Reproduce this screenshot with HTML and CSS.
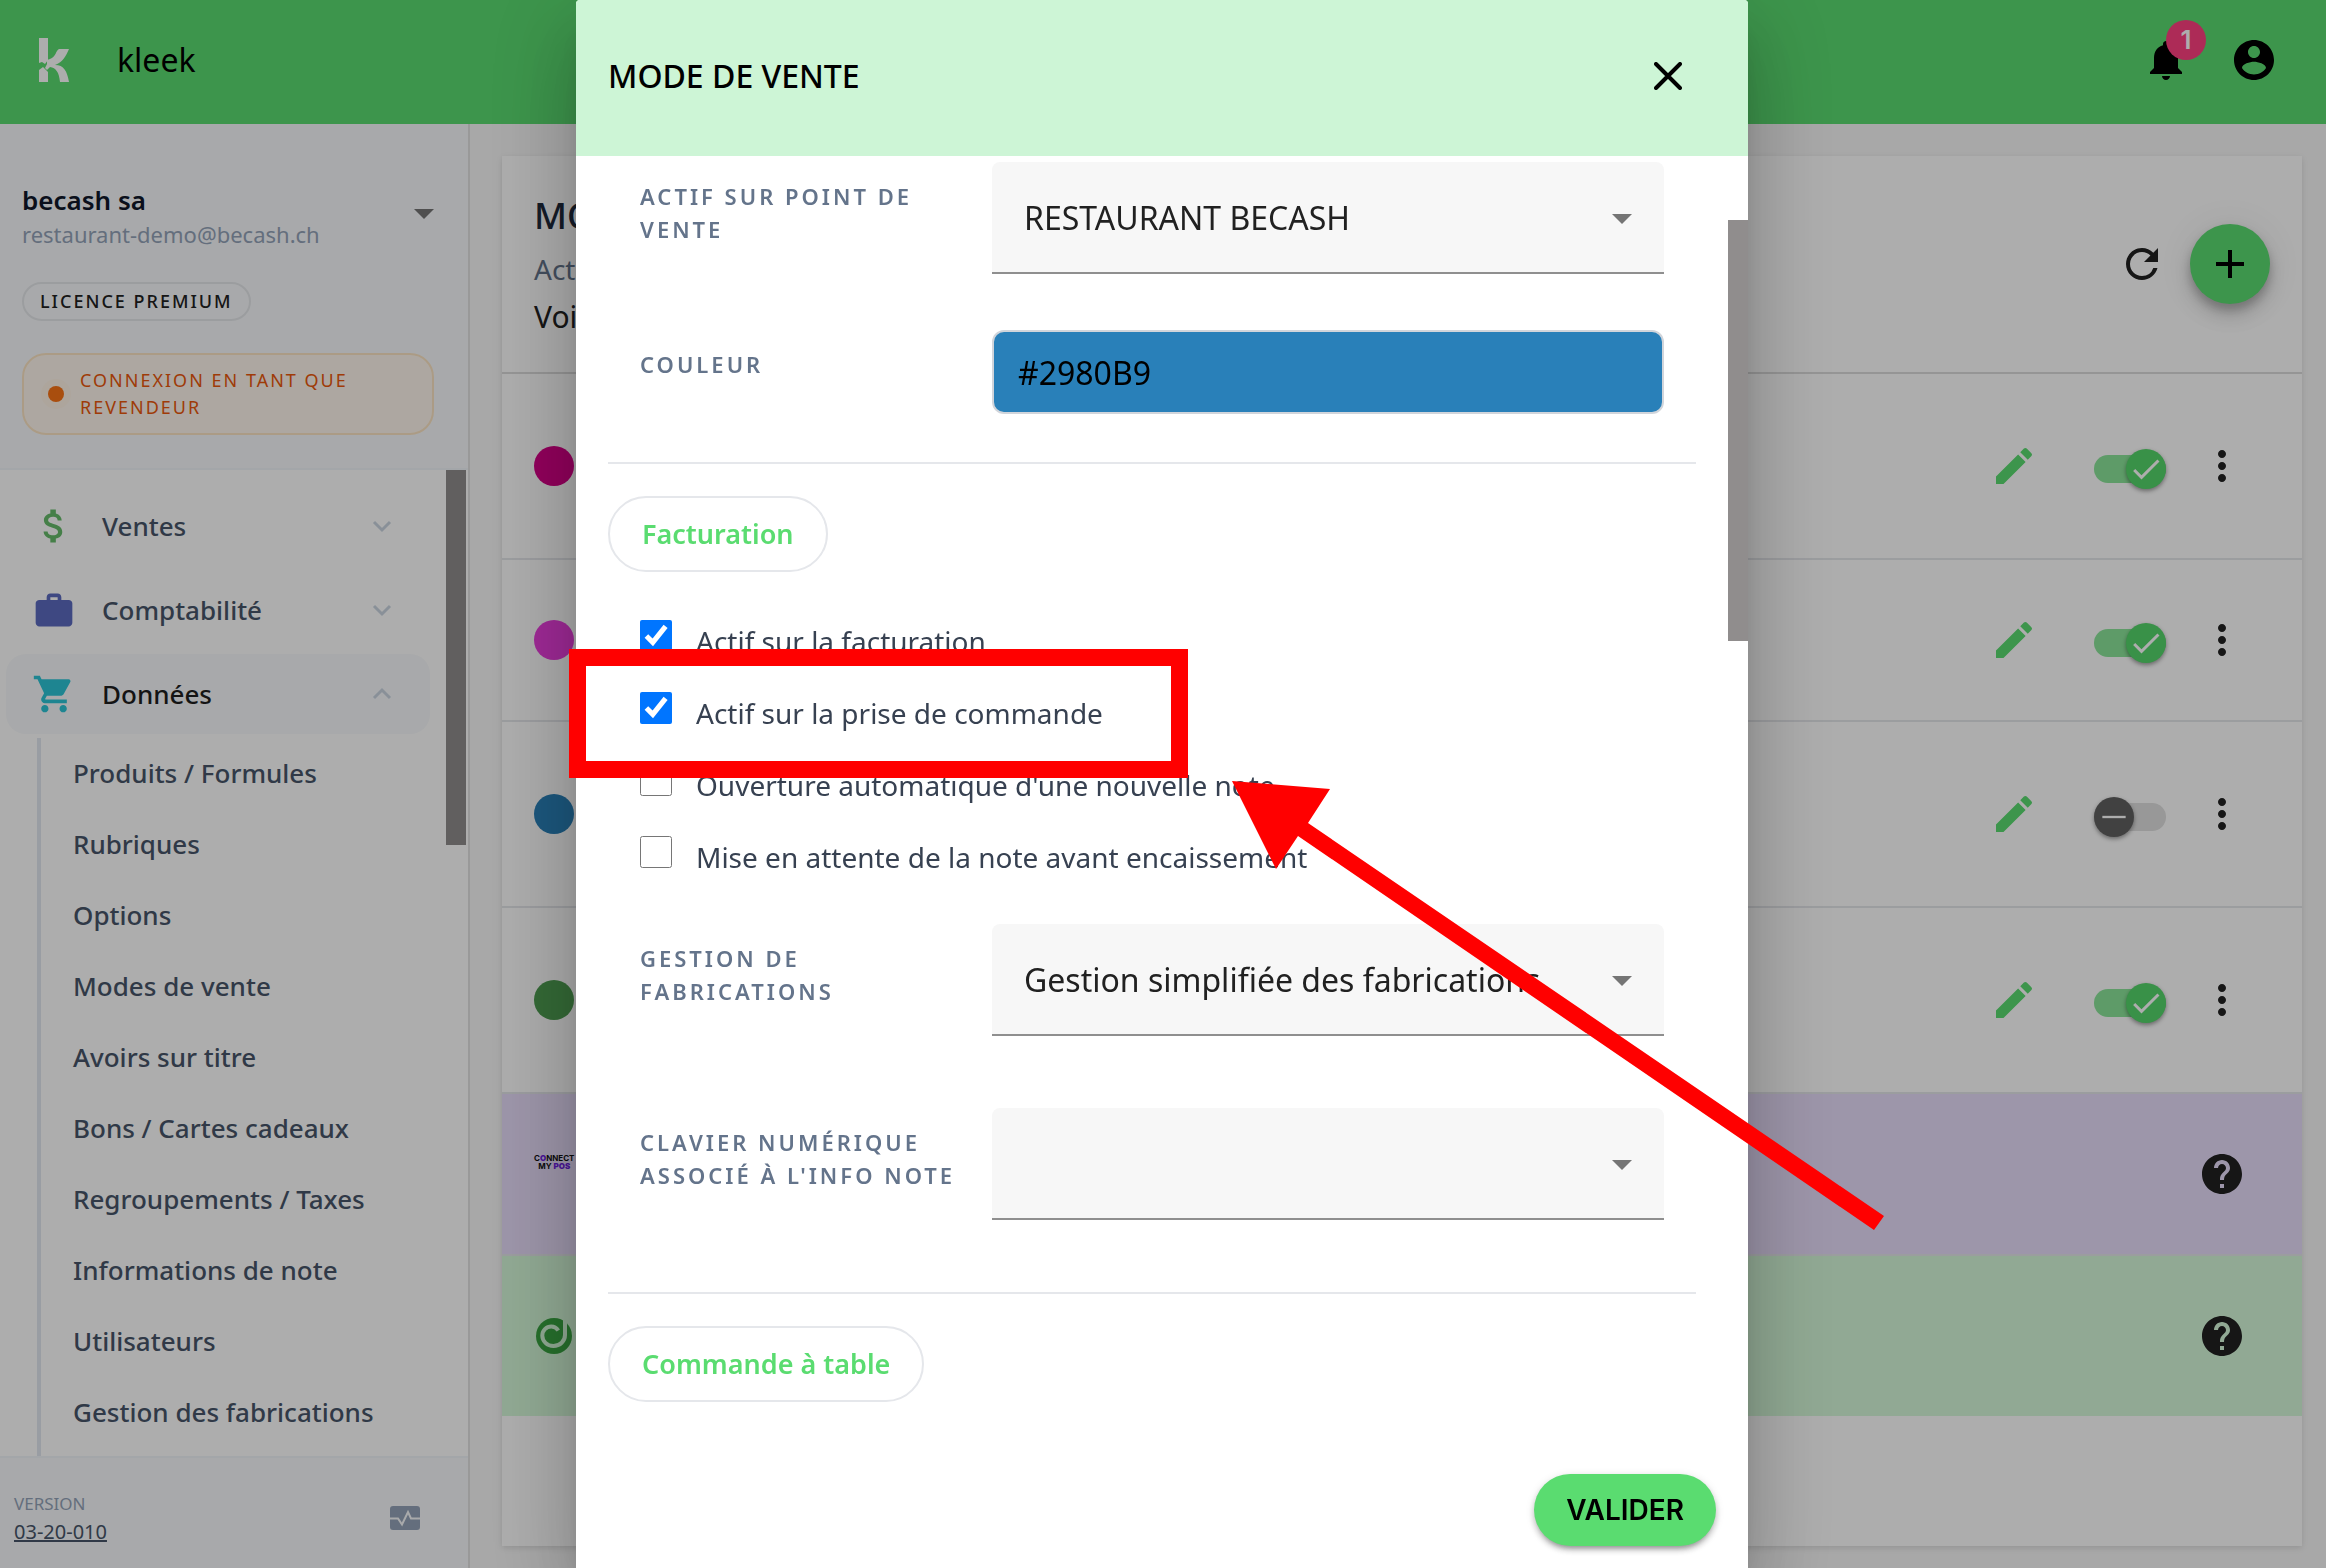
FILE: index.html
```html
<!DOCTYPE html>
<html lang="fr">
<head>
    <meta charset="utf-8">
    <meta name="viewport" content="width=device-width, initial-scale=1">
    <link rel="stylesheet" href="styles.css">
    <title>kleek</title>
</head>
<body>
<svg class="sprite" aria-hidden="true">
    <symbol id="i-pencil" viewBox="0 0 24 24"><path d="M3 17.25V21h3.75L17.81 9.94l-3.75-3.75L3 17.25zM20.71 7.04a1 1 0 0 0 0-1.41l-2.34-2.34a1 1 0 0 0-1.41 0l-1.83 1.83 3.75 3.75 1.83-1.83z"/></symbol>
    <symbol id="i-more" viewBox="0 0 24 24"><path d="M12 8c1.1 0 2-.9 2-2s-.9-2-2-2-2 .9-2 2 .9 2 2 2zm0 2c-1.1 0-2 .9-2 2s.9 2 2 2 2-.9 2-2-.9-2-2-2zm0 6c-1.1 0-2 .9-2 2s.9 2 2 2 2-.9 2-2-.9-2-2-2z"/></symbol>
    <symbol id="i-help" viewBox="0 0 24 24"><path d="M12 2C6.48 2 2 6.48 2 12s4.480 10 10 10 10-4.480 10-10S17.520 2 12 2zm1 17h-2v-2h2v2zm2.070-7.750-.9.920C13.450 12.900 13 13.500 13 15h-2v-.5c0-1.100.45-2.100 1.170-2.830l1.240-1.260c.37-.36.59-.86.59-1.410 0-1.100-.9-2-2-2s-2 .9-2 2H8c0-2.210 1.790-4 4-4s4 1.790 4 4c0 .88-.36 1.680-.93 2.250z"/></symbol>
    <symbol id="i-chevron" viewBox="0 0 24 24"><path d="M4 8l8 8 8-8" fill="none" stroke="currentColor" stroke-width="3"/></symbol>
    <symbol id="i-arrow" viewBox="0 0 20 10"><path d="M0 0h20L10 10z"/></symbol>
    <symbol id="i-check" viewBox="0 0 24 24"><path d="M9 16.170 4.830 12l-1.420 1.410L9 19 21 7l-1.410-1.410z"/></symbol>
</svg>

<div class="app">
    <header class="topbar">
        <svg class="logo" viewBox="0 0 30 44" aria-hidden="true">
            <path d="M0 0h9v22L6 26 3 24 0 25z"/>
            <path d="M0 32l4-3 3 3 2 2v10H0z"/>
            <path d="M8 22l3-1C17 19 17 12 20 11h10C27 18 24 24 16 27c9 0 12 6 14 17H21C20 34 17 30 11 29l-3 3-2-2 2-4z"/>
        </svg>
        <span class="brand">kleek</span>
        <button class="bell" aria-label="Notifications">
            <svg viewBox="0 0 24 24"><path d="M12 22c1.100 0 2-.9 2-2h-4c0 1.100.9 2 2 2zm6-6v-5c0-3.070-1.630-5.640-4.500-6.320V4c0-.83-.67-1.500-1.500-1.500s-1.500.67-1.500 1.500v.68C7.640 5.360 6 7.920 6 11v5l-2 2v1h16v-1l-2-2z"/></svg>
            <span class="badge">1</span>
        </button>
        <button class="account" aria-label="Compte">
            <svg viewBox="0 0 24 24"><path d="M12 2C6.480 2 2 6.480 2 12s4.480 10 10 10 10-4.480 10-10S17.520 2 12 2zm0 3c1.660 0 3 1.340 3 3s-1.340 3-3 3-3-1.340-3-3 1.340-3 3-3zm0 14.200c-2.500 0-4.710-1.280-6-3.220.03-1.990 4-3.080 6-3.080 1.990 0 5.970 1.090 6 3.080-1.290 1.940-3.500 3.220-6 3.220z"/></svg>
        </button>
    </header>

    <aside class="sidebar">
        <div class="profile">
            <button class="company">
                <span class="company-text">
                    <span class="company-name">becash sa</span>
                    <span class="company-mail">restaurant-demo@becash.ch</span>
                </span>
                <svg class="caret"><use href="#i-arrow"/></svg>
            </button>
            <span class="licence">LICENCE PREMIUM</span>
            <div class="reseller"><span class="dot"></span><span>CONNEXION EN TANT QUE REVENDEUR</span></div>
        </div>

        <nav class="menu">
            <div class="menu-scroll">
                <a class="menu-item" href="#">
                    <svg class="menu-icon sales" viewBox="0 0 24 24"><path d="M11.800 10.900c-2.270-.59-3-1.200-3-2.150 0-1.090 1.010-1.850 2.700-1.850 1.780 0 2.440.85 2.500 2.100h2.210c-.07-1.720-1.120-3.300-3.210-3.810V3h-3v2.160c-1.940.42-3.500 1.680-3.500 3.610 0 2.310 1.910 3.460 4.700 4.130 2.500.6 3 1.480 3 2.410 0 .69-.49 1.790-2.700 1.790-2.060 0-2.870-.92-2.980-2.100h-2.200c.12 2.190 1.760 3.420 3.680 3.830V21h3v-2.150c1.950-.37 3.500-1.500 3.500-3.550 0-2.840-2.430-3.810-4.700-4.400z"/></svg>
                    <span>Ventes</span>
                    <svg class="chevron"><use href="#i-chevron"/></svg>
                </a>
                <a class="menu-item" href="#">
                    <svg class="menu-icon accounting" viewBox="0 0 24 24"><path d="M20 6.500h-4V5c0-1.110-.89-2-2-2h-4c-1.110 0-2 .89-2 2v1.500H4c-1.110 0-2 .7-2 1.800V19c0 1.110.89 2 2 2h16c1.110 0 2-.89 2-2V8.300c0-1.100-.89-1.800-2-1.800zm-6 0h-4V5h4v1.500z"/></svg>
                    <span>Comptabilité</span>
                    <svg class="chevron"><use href="#i-chevron"/></svg>
                </a>
                <a class="menu-item active" href="#">
                    <svg class="menu-icon data" viewBox="0 0 24 24"><path d="M7 18c-1.100 0-1.990.9-1.990 2S5.900 22 7 22s2-.9 2-2-.9-2-2-2zM1 2v2h2l3.600 7.590-1.350 2.450c-.16.28-.25.61-.25.96 0 1.100.9 2 2 2h12v-2H7.420c-.14 0-.25-.11-.25-.25l.03-.12.9-1.630h7.450c.75 0 1.410-.41 1.750-1.030l3.580-6.490A1 1 0 0 0 20 4H5.210l-.94-2H1zm16 16c-1.100 0-1.990.9-1.990 2s.89 2 1.990 2 2-.9 2-2-.9-2-2-2z"/></svg>
                    <span>Données</span>
                    <svg class="chevron up"><use href="#i-chevron"/></svg>
                </a>
                <ul class="submenu">
                    <li><a href="#">Produits / Formules</a></li>
                    <li><a href="#">Rubriques</a></li>
                    <li><a href="#">Options</a></li>
                    <li><a href="#">Modes de vente</a></li>
                    <li><a href="#">Avoirs sur titre</a></li>
                    <li><a href="#">Bons / Cartes cadeaux</a></li>
                    <li><a href="#">Regroupements / Taxes</a></li>
                    <li><a href="#">Informations de note</a></li>
                    <li><a href="#">Utilisateurs</a></li>
                    <li><a href="#">Gestion des fabrications</a></li>
                </ul>
            </div>
            <div class="menu-thumb"></div>
        </nav>

        <footer class="version">
            <div>
                <div class="version-label">VERSION</div>
                <a href="#">03-20-010</a>
            </div>
            <svg class="pulse" viewBox="0 0 30 24"><path d="M3 0h24a3 3 0 0 1 3 3v18a3 3 0 0 1-3 3H3a3 3 0 0 1-3-3V3a3 3 0 0 1 3-3z"/><path d="M0 12.500h8l4 6L18 6l3 6.500h9" fill="none" stroke="#f8fafc" stroke-width="2"/></svg>
        </footer>
    </aside>

    <main class="content">
        <section class="card">
            <div class="card-head">
                <div class="card-titles">
                    <h1>MO</h1>
                    <p class="card-sub">Act</p>
                    <p class="card-link">Voi</p>
                </div>
                <button class="icon-btn" aria-label="Actualiser"><svg viewBox="0 0 24 24"><path d="M17.650 6.350A7.958 7.958 0 0 0 12 4c-4.420 0-7.990 3.580-7.990 8s3.570 8 7.990 8c3.730 0 6.840-2.550 7.730-6h-2.080A5.990 5.990 0 0 1 12 18c-3.310 0-6-2.690-6-6s2.690-6 6-6c1.660 0 3.140.69 4.220 1.780L13 11h7V4l-2.350 2.350z"/></svg></button>
                <button class="fab" aria-label="Ajouter"><svg viewBox="0 0 24 24"><path d="M19 13h-6v6h-2v-6H5v-2h6V5h2v6h6v2z"/></svg></button>
            </div>
            <ul class="modes">
                <li class="mode tall">
                    <span class="swatch pink"></span>
                    <button class="icon-btn edit" aria-label="Modifier"><svg><use href="#i-pencil"/></svg></button>
                    <label class="switch"><input type="checkbox" aria-label="Actif" checked><span class="knob"><svg><use href="#i-check"/></svg></span></label>
                    <button class="icon-btn" aria-label="Plus"><svg><use href="#i-more"/></svg></button>
                </li>
                <li class="mode">
                    <span class="swatch magenta"></span>
                    <button class="icon-btn edit" aria-label="Modifier"><svg><use href="#i-pencil"/></svg></button>
                    <label class="switch"><input type="checkbox" aria-label="Actif" checked><span class="knob"><svg><use href="#i-check"/></svg></span></label>
                    <button class="icon-btn" aria-label="Plus"><svg><use href="#i-more"/></svg></button>
                </li>
                <li class="mode tall">
                    <span class="swatch blue"></span>
                    <button class="icon-btn edit" aria-label="Modifier"><svg><use href="#i-pencil"/></svg></button>
                    <label class="switch off"><input type="checkbox" aria-label="Actif"><span class="knob"><svg viewBox="0 0 24 24"><path d="M2 11h20v2H2z"/></svg></span></label>
                    <button class="icon-btn" aria-label="Plus"><svg><use href="#i-more"/></svg></button>
                </li>
                <li class="mode tall">
                    <span class="swatch green"></span>
                    <button class="icon-btn edit" aria-label="Modifier"><svg><use href="#i-pencil"/></svg></button>
                    <label class="switch"><input type="checkbox" aria-label="Actif" checked><span class="knob"><svg><use href="#i-check"/></svg></span></label>
                    <button class="icon-btn" aria-label="Plus"><svg><use href="#i-more"/></svg></button>
                </li>
                <li class="mode partner-pos">
                    <span class="pos-logo"><span>C<b>O</b>NNECT</span><span>MY <b>POS</b></span></span>
                    <button class="icon-btn" aria-label="Aide"><svg><use href="#i-help"/></svg></button>
                </li>
                <li class="mode partner-green">
                    <svg class="spiral" viewBox="0 0 40 40">
                        <circle cx="20" cy="20" r="18"/>
                        <path d="M31 1v18c0 6-5 11-11.500 11S8.300 25 8.300 19.500c0-5 4-9 9-9 3 0 5 1 7 4" fill="none" stroke="#d6fada" stroke-width="4"/>
                    </svg>
                    <button class="icon-btn" aria-label="Aide"><svg><use href="#i-help"/></svg></button>
                </li>
            </ul>
        </section>
    </main>
</div>

<div class="backdrop">
    <form class="dialog" role="dialog" aria-labelledby="dialog-title">
        <div class="dialog-head">
            <h2 id="dialog-title">MODE DE VENTE</h2>
            <button type="button" class="close" aria-label="Fermer"><svg viewBox="0 0 28 28"><path d="M2 2l24 24M26 2L2 26" fill="none" stroke="#000" stroke-width="4" stroke-linecap="round"/></svg></button>
        </div>
        <div class="dialog-body">
            <div class="field">
                <label for="pos">ACTIF SUR POINT DE VENTE</label>
                <div class="select">
                    <select id="pos"><option>RESTAURANT BECASH</option></select>
                    <svg class="caret"><use href="#i-arrow"/></svg>
                </div>
            </div>
            <div class="field">
                <label for="color">COULEUR</label>
                <input class="color" id="color" type="text" value="#2980B9">
            </div>
            <hr>
            <h3 class="chip">Facturation</h3>
            <div class="checks">
                <label><input type="checkbox" checked><span>Actif sur la facturation</span></label>
                <label><input type="checkbox" checked><span>Actif sur la prise de commande</span></label>
                <label><input type="checkbox"><span>Ouverture automatique d'une nouvelle note</span></label>
                <label><input type="checkbox"><span>Mise en attente de la note avant encaissement</span></label>
            </div>
            <div class="field spaced">
                <label for="manufacturing">GESTION DE FABRICATIONS</label>
                <div class="select">
                    <select id="manufacturing"><option>Gestion simplifiée des fabrications</option></select>
                    <svg class="caret"><use href="#i-arrow"/></svg>
                </div>
            </div>
            <div class="field spaced">
                <label for="keypad">CLAVIER NUMÉRIQUE ASSOCIÉ À L'INFO NOTE</label>
                <div class="select">
                    <select id="keypad"><option></option></select>
                    <svg class="caret"><use href="#i-arrow"/></svg>
                </div>
            </div>
            <hr>
            <h3 class="chip">Commande à table</h3>
        </div>
        <div class="dialog-foot">
            <button type="submit" class="submit">VALIDER</button>
        </div>
        <div class="dialog-thumb"></div>

        <!-- tutorial marks: frame and arrow -->
        <div class="mark-frame"></div>
        <svg class="mark-arrow" viewBox="0 0 652 450"><path d="M0 0l98 8-22 34 576 393-10 14L66 55 44 88z"/></svg>
    </form>
</div>
</body>
</html>
```

FILE: styles.css
```css
*{
    box-sizing: border-box;
}

body{
    margin: 0;
    font-family: "Noto Sans", sans-serif;
    font-size: 28px;
    color: #212121;
}

h1, h2, h3, p, ul{
    margin: 0;
    padding: 0;
    font-weight: 500;
}

ul{
    list-style: none;
}

button{
    font: inherit;
    color: inherit;
    background: none;
    border: 0;
    padding: 0;
    cursor: pointer;
}

a{
    color: inherit;
    text-decoration: none;
}

svg{
    display: block;
    fill: currentColor;
}

.sprite{
    position: absolute;
    width: 0;
    height: 0;
}

.app{
    display: grid;
    grid-template-columns: 470px 1fr;
    grid-template-rows: 124px 1fr;
    height: 100vh;
    overflow: hidden;
}

/* top bar */
.topbar{
    grid-column: 1 / 3;
    display: flex;
    align-items: center;
    padding: 0 48px 4px 39px;
    background: #5adc70;
    color: #000;
}

.logo{
    width: 30px;
    height: 44px;
    color: #fff;
}

.brand{
    flex: 1;
    margin-left: 48px;
    font-size: 32px;
    line-height: 48px;
}

.bell, .account{
    position: relative;
    width: 48px;
    height: 48px;
}

.bell{
    margin-right: 40px;
}

.badge{
    position: absolute;
    top: -16px;
    right: -16px;
    width: 40px;
    height: 40px;
    border-radius: 50%;
    background: #ff4081;
    color: #fff;
    font: 600 26px/40px Inter, sans-serif;
    text-align: center;
}

/* sidebar */
.sidebar{
    display: flex;
    flex-direction: column;
    min-height: 0;
    border-right: 2px solid #e2e2e2;
    background: #fff;
}

.profile{
    padding: 56px 34px 33px 22px;
    background: #f8fafc;
    border-bottom: 2px solid #f1f5f9;
}

.company{
    display: flex;
    align-items: center;
    justify-content: space-between;
    width: 100%;
    text-align: left;
}

.company-name{
    display: block;
    font-size: 26px;
    line-height: 40px;
    font-weight: 600;
    color: #0f172a;
}

.company-mail{
    display: block;
    font-size: 22px;
    line-height: 28px;
    color: #94a3b8;
}

.caret{
    width: 20px;
    height: 10px;
    color: #757575;
}

.licence{
    display: inline-block;
    margin-top: 34px;
    padding: 0 16px;
    border: 2px solid #e5e7eb;
    border-radius: 20px;
    font-size: 18px;
    line-height: 35px;
    font-weight: 500;
    letter-spacing: 2px;
}

.reseller{
    display: flex;
    align-items: center;
    gap: 16px;
    margin-top: 32px;
    padding: 12px 24px;
    border: 2px solid #fde5c4;
    border-radius: 24px;
    background: #fff7ed;
    color: #ea580c;
    font-size: 18px;
    line-height: 27px;
    letter-spacing: 2px;
}

.dot{
    flex: none;
    width: 16px;
    height: 16px;
    border-radius: 50%;
    background: #f97316;
    box-shadow: 0 0 0 7px rgba(249, 115, 22, .03);
}

.menu{
    position: relative;
    flex: 1;
    min-height: 0;
}

.menu-scroll{
    height: 100%;
    padding: 16px 38px 0 6px;
    overflow: hidden;
}

.menu-item{
    display: flex;
    align-items: center;
    height: 80px;
    margin-bottom: 4px;
    padding: 0 36px 0 26px;
    border-radius: 20px;
    color: #475569;
    font-size: 26px;
    font-weight: 500;
}

.menu-item span{
    flex: 1;
    margin-left: 26px;
}

.menu-item.active{
    background: #f8fafc;
    color: #1e1e1e;
}

.menu-icon{
    width: 44px;
    height: 44px;
}

.sales{
    color: #66bb6a;
}

.accounting{
    color: #5c6bc0;
}

.data{
    color: #2dc5d6;
}

.chevron{
    width: 24px;
    height: 24px;
    color: #cbd5e1;
}

.chevron.up{
    transform: rotate(180deg);
}

.submenu{
    margin-left: 31px;
    padding-bottom: 20px;
    border-left: 4px solid #e2e8f0;
}

.submenu a{
    display: block;
    padding-left: 32px;
    font-size: 26px;
    line-height: 71px;
    font-weight: 500;
    color: #475569;
}

.menu-thumb{
    position: absolute;
    top: 0;
    right: 2px;
    width: 20px;
    height: 38%;
    background: #908d8d;
}

.version{
    display: flex;
    align-items: center;
    justify-content: space-between;
    height: 112px;
    padding: 10px 48px 0 14px;
    border-top: 2px solid #f1f5f9;
    background: #f8fafc;
}

.version-label{
    font-size: 17px;
    line-height: 28px;
    color: #94a3b8;
}

.version a{
    display: block;
    font-size: 20px;
    line-height: 28px;
    color: #475569;
    text-decoration: underline;
}

.pulse{
    width: 30px;
    height: 24px;
    color: #94a3b8;
}

/* main list */
.content{
    padding: 32px 24px 22px 32px;
    background: #f8f8f8;
}

.card{
    height: 100%;
    background: #fff;
    box-shadow: 0 2px 6px rgba(0, 0, 0, .12);
}

.card-head{
    display: flex;
    align-items: center;
    height: 218px;
    padding: 0 32px;
    border-bottom: 2px solid #dcdcdc;
}

.card-titles{
    flex: 1;
}

.card-titles h1{
    font-size: 36px;
    line-height: 58px;
    color: #1e293b;
}

.card-titles p{
    font-weight: 400;
    line-height: 48px;
}

.card-sub{
    color: #64748b;
}

.card-link{
    font-size: 30px;
}

.icon-btn{
    display: flex;
    align-items: center;
    justify-content: center;
    width: 96px;
    height: 96px;
}

.icon-btn svg, .bell svg, .account svg{
    width: 48px;
    height: 48px;
}

.fab{
    display: flex;
    align-items: center;
    justify-content: center;
    width: 80px;
    height: 80px;
    border-radius: 50%;
    background: #5adc70;
    color: #000;
    box-shadow: 0 6px 10px rgba(0, 0, 0, .2), 0 12px 20px rgba(0, 0, 0, .14), 0 2px 36px rgba(0, 0, 0, .08);
}

.fab svg{
    width: 48px;
    height: 48px;
}

.mode{
    display: flex;
    align-items: center;
    gap: 8px;
    height: 162px;
    padding: 0 32px;
    border-bottom: 2px solid #e5e7eb;
}

.mode.tall{
    height: 186px;
}

.swatch{
    width: 40px;
    height: 40px;
    margin-right: auto;
    border-radius: 50%;
}

.pink{
    background: #d60087;
}

.magenta{
    background: #e93ddc;
}

.blue{
    background: #2980b9;
}

.green{
    background: #4d9c50;
}

.edit{
    margin-right: 24px;
    color: #5adc70;
}

.switch{
    position: relative;
    display: flex;
    align-items: center;
    width: 72px;
    height: 40px;
    margin-top: 6px;
}

.switch input{
    appearance: none;
    width: 72px;
    height: 28px;
    margin: 0;
    border-radius: 14px;
    background: #8be59a;
}

.knob{
    position: absolute;
    right: 0;
    display: flex;
    align-items: center;
    justify-content: center;
    width: 40px;
    height: 40px;
    border-radius: 50%;
    background: #54d66a;
    color: #fff;
    box-shadow: 0 2px 4px rgba(0, 0, 0, .4);
}

.knob svg{
    width: 36px;
    height: 36px;
}

.switch.off input{
    background: #e0e0e0;
}

.switch.off .knob{
    right: auto;
    left: 0;
    background: #616161;
}

.switch.off .knob svg{
    width: 28px;
}

.partner-pos{
    justify-content: space-between;
    background: #e8ddfb;
}

.partner-green{
    justify-content: space-between;
    border: 0;
    height: 160px;
    background: #d6fada;
}

.pos-logo{
    display: flex;
    flex-direction: column;
    align-items: center;
    margin-bottom: 24px;
    font: 700 8px/8px Inter, sans-serif;
    color: #111;
}

.pos-logo b{
    color: #6d1fe0;
}

.spiral{
    width: 40px;
    height: 40px;
    color: #39a541;
}

/* dialog */
.backdrop{
    position: fixed;
    inset: 0;
    display: flex;
    justify-content: center;
    padding-right: 2px;
    background: rgba(0, 0, 0, .32);
}

.dialog{
    position: relative;
    display: flex;
    flex-direction: column;
    width: 100%;
    max-width: 1172px;
    height: 100%;
    border-radius: 4px 4px 0 0;
    background: #fff;
    box-shadow: 0 22px 30px -14px rgba(0, 0, 0, .2), 0 48px 76px 6px rgba(0, 0, 0, .14), 0 18px 92px 16px rgba(0, 0, 0, .12);
}

.dialog-head{
    display: flex;
    align-items: center;
    justify-content: space-between;
    height: 156px;
    padding: 0 66px 4px 32px;
    border-radius: 4px 4px 0 0;
    background: #cdf5d6;
    color: #000;
}

.dialog-head h2{
    font-size: 32px;
    line-height: 48px;
}

.close svg{
    width: 28px;
    height: 28px;
}

.dialog-body{
    flex: 1;
    min-height: 0;
    padding: 6px 52px 0 32px;
    overflow: hidden;
}

.field{
    display: grid;
    grid-template-columns: 320px 1fr;
    column-gap: 32px;
    padding: 0 32px;
    margin-bottom: 56px;
}

.field:has(.color){
    margin-bottom: 48px;
}

.field.spaced{
    margin-bottom: 72px;
}

.field label{
    padding-top: 18px;
    font-size: 22px;
    line-height: 33px;
    font-weight: 600;
    letter-spacing: 3px;
    color: #64748b;
}

.select{
    position: relative;
}

.select select{
    display: block;
    appearance: none;
    width: 100%;
    height: 112px;
    padding: 2px 80px 0 32px;
    border: 0;
    border-bottom: 2px solid #8f8f8f;
    border-radius: 8px 8px 0 0;
    background: #f7f7f7;
    font: 400 32px/48px "Noto Sans", sans-serif;
    color: #212121;
}

.select .caret{
    position: absolute;
    top: 52px;
    right: 32px;
}

.color{
    height: 84px;
    padding: 0 24px;
    border: 2px solid #d1d5db;
    border-radius: 12px;
    background: #2980b9;
    font: 400 32px/48px "Noto Sans", sans-serif;
    color: #000;
}

hr{
    height: 2px;
    margin: 0 0 32px;
    border: 0;
    background: #e5e7eb;
}

.chip{
    width: fit-content;
    padding: 0 32px;
    border: 2px solid #e5e7eb;
    border-radius: 38px;
    font-size: 27px;
    line-height: 72px;
    font-weight: 600;
    color: #5adc70;
}

.checks{
    padding: 48px 32px 16px;
}

.checks label{
    display: flex;
    align-items: baseline;
    gap: 24px;
    height: 72px;
    font-size: 28px;
    line-height: 42px;
    color: #374151;
}

.checks input{
    width: 32px;
    height: 32px;
    margin: 0;
}

.dialog-foot{
    display: flex;
    justify-content: flex-end;
    padding: 22px 32px;
}

.submit{
    height: 72px;
    padding: 0 32px;
    border-radius: 36px;
    background: #5adc70;
    color: #000;
    font: 600 28px/72px Inter, sans-serif;
    box-shadow: 0 6px 4px -4px rgba(0, 0, 0, .2), 0 4px 6px rgba(0, 0, 0, .2), 0 2px 10px rgba(0, 0, 0, .12);
}

.dialog-thumb{
    position: absolute;
    top: 220px;
    right: 0;
    width: 20px;
    height: 421px;
    background: #908d8d;
}

.mark-frame{
    position: absolute;
    top: 649px;
    left: -7px;
    width: 619px;
    height: 129px;
    border: 17px solid #f00;
}

.mark-arrow{
    position: absolute;
    top: 781px;
    left: 656px;
    width: 652px;
    height: 450px;
    color: #f00;
}
```
